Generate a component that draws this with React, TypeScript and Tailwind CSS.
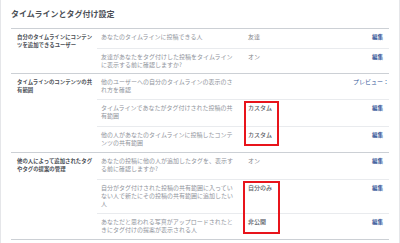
import React from "react";

type Row = {
  lines: string[];
  value?: string;
  strong?: boolean;
  link?: string;
  h: string;
};

type Section = {
  label: string[];
  rows: Row[];
};

const sections: Section[] = [
  {
    label: ["自分のタイムラインにコンテン", "ツを追加できるユーザー"],
    rows: [
      { lines: ["あなたのタイムラインに投稿できる人"], value: "友達", h: "h-[19px]" },
      {
        lines: ["友達があなたをタグ付けした投稿をタイムライン", "に表示する前に確認しますか?"],
        value: "オン",
        h: "h-[25px]",
      },
    ],
  },
  {
    label: ["タイムラインのコンテンツの共", "有範囲"],
    rows: [
      {
        lines: ["他のユーザーへの自分のタイムラインの表示のさ", "れ方を確認"],
        link: "プレビュー：",
        h: "h-[25px]",
      },
      {
        lines: ["タイムラインであなたがタグ付けされた投稿の共", "有範囲"],
        value: "カスタム",
        strong: true,
        h: "h-[27px]",
      },
      {
        lines: ["他の人があなたのタイムラインに投稿したコンテ", "ンツの共有範囲"],
        value: "カスタム",
        strong: true,
        h: "h-[26px]",
      },
    ],
  },
  {
    label: ["他の人によって追加されたタグ", "やタグの提案の管理"],
    rows: [
      {
        lines: ["あなたの投稿に他の人が追加したタグを、表示す", "る前に確認しますか?"],
        value: "オン",
        h: "h-[26px]",
      },
      {
        lines: [
          "自分がタグ付けされた投稿の共有範囲に入ってい",
          "ない人で新たにその投稿の共有範囲に追加したい",
          "人",
        ],
        value: "自分のみ",
        strong: true,
        h: "h-[34px]",
      },
      {
        lines: ["あなただと思われる写真がアップロードされたと", "きにタグ付けの提案が表示される人"],
        value: "非公開",
        strong: true,
        h: "h-[26px]",
      },
    ],
  },
];

const SettingRow: React.FC<{ row: Row; first: boolean }> = ({ row, first }) => {
  return (
    <div
      className={`flex box-border pl-[4px] pt-[4px] ${row.h} ${
        first ? "" : "border-t border-[#e9ebee]"
      }`}
    >
      <div className="w-[147px] shrink-0 text-[6px] leading-[8px] text-[#90949c] whitespace-nowrap">
        {row.lines.map((l) => (
          <div key={l}>{l}</div>
        ))}
      </div>
      {row.link ? (
        <div className="flex-1 text-right text-[6px] leading-[8px] text-[#365899] whitespace-nowrap">
          {row.link}
        </div>
      ) : (
        <>
          <div
            className={`flex-1 text-[6px] leading-[8px] ${
              row.strong ? "font-medium text-[#5d6168]" : "text-[#7f8389]"
            }`}
          >
            {row.value}
          </div>
          <div className="pr-[6px] text-[5.5px] leading-[8px] font-semibold text-[#365899]">編集</div>
        </>
      )}
    </div>
  );
};

export default function App() {
  return (
    <div
      className="relative w-[400px] h-[243px] overflow-hidden bg-white border-x border-[#e5e6e9] box-border"
      style={{ fontFamily: '"Noto Sans CJK JP", "Noto Sans", sans-serif' }}
    >
      <div className="h-[28px] pl-[10px] flex items-center text-[8px] font-bold text-[#4b4f56]">
        タイムラインとタグ付け設定
      </div>
      <div className="mx-[10px] border-t border-[#ccd0d5]">
        {sections.map((s) => (
          <div key={s.label[0]} className="flex border-b border-[#ccd0d5]">
            <div className="w-[86px] shrink-0 box-border pl-[6px] pt-[4px] text-[5.4px] leading-[8px] font-bold text-[#4b4f56] whitespace-nowrap">
              {s.label.map((l) => (
                <div key={l}>{l}</div>
              ))}
            </div>
            <div className="flex-1">
              {s.rows.map((r, i) => (
                <SettingRow key={r.lines[0]} row={r} first={i === 0} />
              ))}
            </div>
          </div>
        ))}
      </div>

      {/* red annotation boxes */}
      <div className="absolute left-[243px] top-[101px] w-[35px] h-[45px] border-2 border-[#e8141b]" />
      <div className="absolute left-[242px] top-[181px] w-[37px] h-[53px] border-2 border-[#e8141b]" />
    </div>
  );
}
